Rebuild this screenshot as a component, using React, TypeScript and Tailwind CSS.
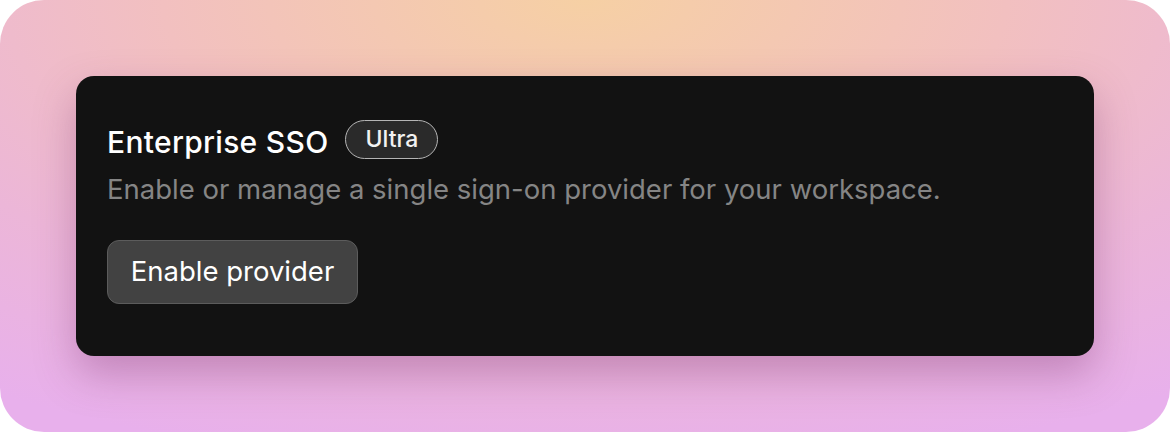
export default function App() {
  return (
    <div className="w-[1170px] h-[432px] bg-white" style={{ fontFamily: "Inter, 'Noto Sans', sans-serif" }}>
      <div className="w-full h-full rounded-[44px] overflow-hidden bg-[radial-gradient(ellipse_90%_110%_at_50%_0%,#f6d0a4_0%,#f2c0c0_40%,#ecb6d8_70%,#e8b0ec_100%)] px-[76px] pt-[76px]">
        <div className="w-[1018px] h-[280px] rounded-[18px] bg-[#121212] pl-[31px] pt-[44px] shadow-[0_18px_40px_rgba(120,50,110,0.35)]">
          <div className="flex items-center gap-[17px] h-[39px]">
            <h2 className="pt-[4px] text-[30px] leading-none font-medium text-white tracking-[0.3px]">Enterprise SSO</h2>
            <span className="h-[39px] w-[93px] flex items-center justify-center rounded-full border-[1.5px] border-[#b5b5b5] bg-[#2a2a2a] text-[23px] font-medium text-[#f2f2f2] leading-none">
              Ultra
            </span>
          </div>
          <p className="mt-[13px] text-[27.5px] leading-[34px] text-[#858585]">
            Enable or manage a single sign-on provider for your workspace.
          </p>
          <button className="mt-[34px] h-[64px] w-[251px] rounded-[12px] bg-[#424242] border border-[#5c5c5c] text-[27.5px] text-white flex items-center justify-center">
            Enable provider
          </button>
        </div>
      </div>
    </div>
  );
}
